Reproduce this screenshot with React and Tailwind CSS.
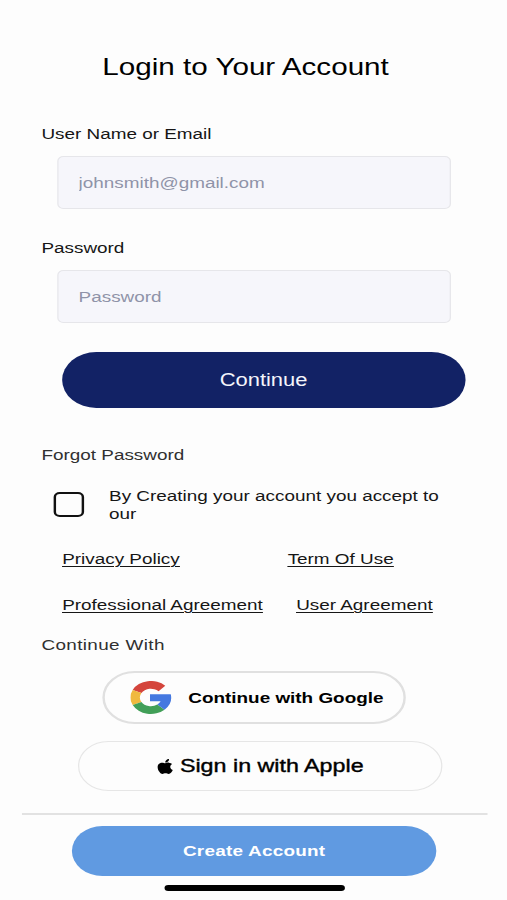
import { useState } from 'react';
import { FaApple } from 'react-icons/fa';

function GoogleIcon() {
  return (
    <svg className="w-[33.5px] h-[33px] shrink-0" viewBox="0 0 100 100" preserveAspectRatio="none">
      <path fill="#d4453c" d="M5.6 27A50 50 0 0 1 85.4 14.6L69 31.2A26.7 26.7 0 0 0 27 36.5Z" />
      <path fill="#f0b93f" d="M5.6 27A50 50 0 0 0 5.6 73L27 63.5A26.7 26.7 0 0 1 27 36.5Z" />
      <path fill="#429f58" d="M5.6 73A50 50 0 0 0 83.6 87L66 71.3A26.7 26.7 0 0 1 27 63.5Z" />
      <path fill="#4478e0" d="M48 40H98.8A50 50 0 0 1 83.6 87L66 71.3A26.7 26.7 0 0 0 74 61.5H48Z" />
    </svg>
  );
}

export default function App() {
  const [formData, setFormData] = useState({ email: '', password: '' });
  const [accepted, setAccepted] = useState(false);

  const handleChange = (e) => {
    const { name, value } = e.target;
    setFormData({ ...formData, [name]: value });
  };

  const inputClass =
    "block ml-[47px] w-[322.5px] h-[53px] rounded-[5px] border border-[#e6e6ea] bg-[#f6f6fb] pl-[16.5px] text-[15.5px] text-black placeholder:text-[#8f93a8] placeholder:opacity-100 focus:outline-none";

  return (
    <div className="w-full h-[900px] overflow-hidden bg-[#fdfdfd]">
      <div className="w-[416px] h-[900px] origin-top-left scale-x-[1.21875] flex flex-col font-['Liberation_Sans',Arial,sans-serif] text-[15.5px] leading-[18px] text-[#161616]">
        <h1 className="mt-[52px] w-[403px] text-center text-[24.3px] leading-[30px] text-black">Login to Your Account</h1>

        <form onSubmit={(e) => e.preventDefault()} className="mt-[43px]">
          <label htmlFor="email" className="block ml-[34px] mb-[13px]">User Name or Email</label>
          <input
            id="email"
            name="email"
            value={formData.email}
            onChange={handleChange}
            placeholder="johnsmith@gmail.com"
            className={inputClass}
          />

          <label htmlFor="password" className="block ml-[34px] mt-[30px] mb-[13px]">Password</label>
          <input
            id="password"
            type="password"
            name="password"
            value={formData.password}
            onChange={handleChange}
            placeholder="Password"
            className={inputClass}
          />

          <button type="submit" className="block ml-[50.5px] mt-[29px] w-[331.5px] h-[56px] rounded-full bg-[#122265] text-[18px] text-[#f4f5fb]">
            Continue
          </button>
        </form>

        <a href="#" className="ml-[34px] mt-[38px] text-[#303030]">Forgot Password</a>

        <label className="flex ml-[43.5px] mt-[23px]">
          <input
            type="checkbox"
            checked={accepted}
            onChange={() => setAccepted(!accepted)}
            className="appearance-none mt-[5px] w-[25px] h-[25px] shrink-0 rounded-[5px] border-2 border-[#111] checked:bg-[#122265]"
          />
          <span className="ml-[21px] w-[290px]">By Creating your account you accept to our</span>
        </label>

        <div className="flex ml-[51px] mt-[27px] underline underline-offset-2 decoration-1">
          <a href="#" className="w-[185px]">Privacy Policy</a>
          <a href="#">Term Of Use</a>
        </div>
        <div className="flex ml-[51px] mt-[28px] underline underline-offset-2 decoration-1">
          <a href="#" className="w-[192px]">Professional Agreement</a>
          <a href="#">User Agreement</a>
        </div>

        <p className="ml-[34px] mt-[22px] tracking-[0.3px] text-[#303030]">Continue With</p>

        <button className="flex items-center ml-[84px] mt-[17px] w-[249px] h-[53px] rounded-full border-2 border-[#e0e0e0] pl-[21px] font-bold text-black">
          <GoogleIcon />
          <span className="ml-[14px] whitespace-nowrap">Continue with Google</span>
        </button>

        <button className="flex items-center justify-center ml-[64px] mt-[17px] w-[299px] h-[50px] rounded-full border border-[#e6e6e6] text-[19.1px] text-black">
          <FaApple className="w-[13px] h-[17px] mr-[6px]" />
          <span className="[-webkit-text-stroke:0.4px_black]">Sign in with Apple</span>
        </button>

        <hr className="ml-[17.5px] mt-[22px] w-[382px] border-0 h-[2px] bg-[#e2e2e2]" />

        <button className="ml-[59px] mt-[11px] w-[299px] h-[50px] rounded-full bg-[#609ae1] font-bold text-[15.5px] tracking-[0.2px] text-white">
          Create Account
        </button>

        <div className="ml-[134.5px] mt-[9px] w-[148px] h-[6px] rounded-full bg-black" />
      </div>
    </div>
  );
}
